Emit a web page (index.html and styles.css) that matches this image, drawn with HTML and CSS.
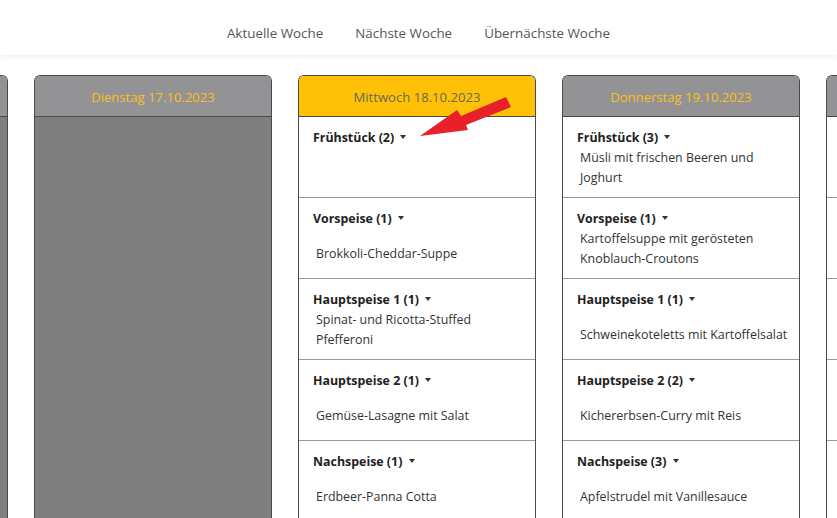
FILE: index.html
```html
<!DOCTYPE html>
<html lang="de">
<head>
<meta charset="utf-8">
<link rel="stylesheet" href="styles.css">
</head>
<body>
<nav class="topnav">
  <a class="navlink">Aktuelle Woche</a>
  <a class="navlink">Nächste Woche</a>
  <a class="navlink">Übernächste Woche</a>
</nav>
<main class="week">
  <section class="day past">
    <header class="day-head"></header>
    <div class="day-body"></div>
  </section>
  <section class="day past">
    <header class="day-head">Dienstag 17.10.2023</header>
    <div class="day-body"></div>
  </section>
  <section class="day today">
    <header class="day-head">Mittwoch 18.10.2023</header>
    <div class="day-body">
      <div class="meal"><div class="meal-title">Frühstück (2) <span class="caret"></span></div><div class="meal-items"></div></div>
      <div class="meal"><div class="meal-title">Vorspeise (1) <span class="caret"></span></div><div class="meal-items"><span>Brokkoli-Cheddar-Suppe</span></div></div>
      <div class="meal"><div class="meal-title">Hauptspeise 1 (1) <span class="caret"></span></div><div class="meal-items top"><span>Spinat- und Ricotta-Stuffed Pfefferoni</span></div></div>
      <div class="meal"><div class="meal-title">Hauptspeise 2 (1) <span class="caret"></span></div><div class="meal-items"><span>Gemüse-Lasagne mit Salat</span></div></div>
      <div class="meal"><div class="meal-title">Nachspeise (1) <span class="caret"></span></div><div class="meal-items"><span>Erdbeer-Panna Cotta</span></div></div>
    </div>
  </section>
  <section class="day">
    <header class="day-head">Donnerstag 19.10.2023</header>
    <div class="day-body">
      <div class="meal"><div class="meal-title">Frühstück (3) <span class="caret"></span></div><div class="meal-items top narrow"><span>Müsli mit frischen Beeren und Joghurt</span></div></div>
      <div class="meal"><div class="meal-title">Vorspeise (1) <span class="caret"></span></div><div class="meal-items top narrow"><span>Kartoffelsuppe mit gerösteten Knoblauch-Croutons</span></div></div>
      <div class="meal"><div class="meal-title">Hauptspeise 1 (1) <span class="caret"></span></div><div class="meal-items"><span>Schweinekoteletts mit Kartoffelsalat</span></div></div>
      <div class="meal"><div class="meal-title">Hauptspeise 2 (2) <span class="caret"></span></div><div class="meal-items"><span>Kichererbsen-Curry mit Reis</span></div></div>
      <div class="meal"><div class="meal-title">Nachspeise (3) <span class="caret"></span></div><div class="meal-items"><span>Apfelstrudel mit Vanillesauce</span></div></div>
    </div>
  </section>
  <section class="day">
    <header class="day-head"></header>
    <div class="day-body">
      <div class="meal"></div>
      <div class="meal"></div>
      <div class="meal"></div>
      <div class="meal"></div>
      <div class="meal"></div>
    </div>
  </section>
</main>
<svg class="annotation" width="837" height="518" viewBox="0 0 837 518" aria-hidden="true">
  <polygon fill="#e8202a" points="506,97 511,107 466,125 468,130 420,136 457,110 461,116"/>
</svg>
</body>
</html>
```
FILE: styles.css
```css
* { box-sizing: border-box; }
html, body { margin: 0; padding: 0; }
body {
  font-family: "Open Sans", "Noto Sans", sans-serif;
  font-size: 12.4px;
  color: #333;
  background: #fff;
  width: 837px;
  height: 518px;
  overflow: hidden;
  position: relative;
}
.topnav {
  height: 55px;
  display: flex;
  justify-content: center;
  align-items: center;
  gap: 32px;
  padding-top: 11px;
  box-shadow: 0 2px 6px rgba(0,0,0,0.07);
  position: relative;
  z-index: 1;
}
.navlink {
  color: #555;
  font-size: 13.4px;
  text-decoration: none;
}
.week {
  display: flex;
  justify-content: center;
  gap: 26px;
  margin-top: 20px;
  padding-right: 3px;
}
.day {
  flex: 0 0 238px;
  width: 238px;
  height: 460px;
  border: 1px solid #4a4a4a;
  border-bottom: none;
  border-radius: 6px 6px 0 0;
  display: flex;
  flex-direction: column;
  overflow: hidden;
}
.day-head {
  height: 41px;
  flex: 0 0 41px;
  padding-top: 1px;
  background: #939395;
  color: #fdbf1a;
  border-bottom: 1px solid #4a4a4a;
  display: flex;
  align-items: center;
  justify-content: center;
  font-size: 13.1px;
}
.today .day-head {
  background: #fec107;
  color: #6b6a4d;
}
.day-body { flex: 1; background: #fff; }
.past .day-body { background: #7f7f7f; }
.meal {
  height: 81px;
  border-bottom: 1px solid #9a9a9a;
  padding: 11px 4px 0 14px;
  display: flex;
  flex-direction: column;
}
.meal-title {
  font-weight: 700;
  color: #222;
  line-height: 20px;
  white-space: nowrap;
}
.caret {
  display: inline-block;
  width: 0;
  height: 0;
  margin-left: 3px;
  vertical-align: 3px;
  border-top: 4px solid #333;
  border-left: 3.5px solid transparent;
  border-right: 3.5px solid transparent;
}
.meal-items {
  flex: 1;
  display: flex;
  align-items: center;
  padding-left: 3px;
  line-height: 20px;
}
.meal-items.top { align-items: flex-start; }
.meal-items.narrow { padding-right: 10px; }
.annotation {
  position: absolute;
  left: 0;
  top: 0;
  pointer-events: none;
}
```
